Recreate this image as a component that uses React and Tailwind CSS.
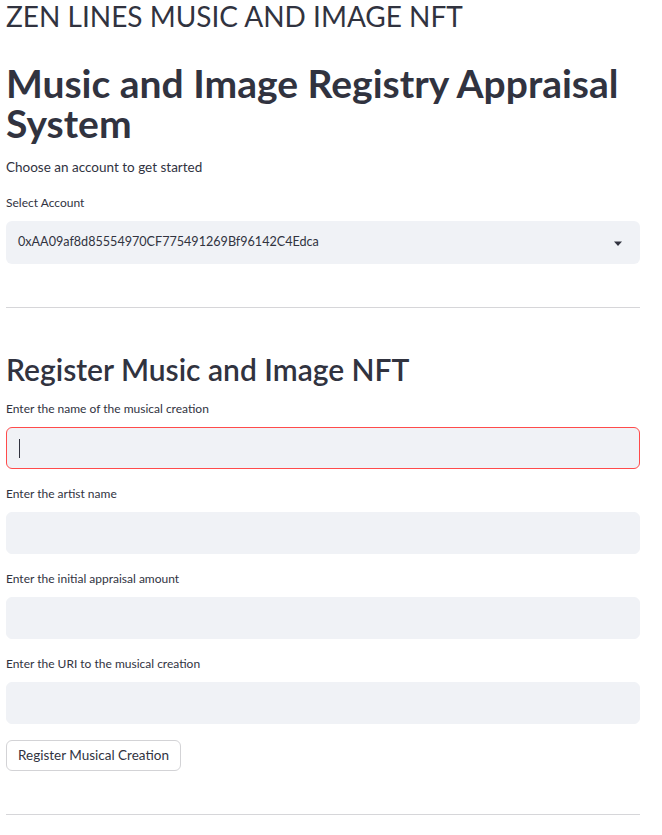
import React from "react";

const FONT = "font-['Lato','Noto_Sans',sans-serif]";

const Label = ({ children }) => (
  <div className="h-[20px] flex items-center text-[12px] text-[#31333f]">
    {children}
  </div>
);

const TextBox = ({ focused }) => (
  <div
    className={`mt-[8px] h-[42px] rounded-[6px] bg-[#f0f2f6] flex items-center px-[12px] border ${
      focused ? "border-[#ff4b4b]" : "border-[#f0f2f6]"
    }`}
  >
    {focused && <span className="block w-[1px] h-[19px] bg-[#31333f]" />}
  </div>
);

const Field = ({ label, focused, className }) => (
  <div className={className}>
    <Label>{label}</Label>
    <TextBox focused={focused} />
  </div>
);

export default function App() {
  return (
    <div className={`${FONT} bg-white text-[#31333f] min-h-[835px] pl-[6px] pr-[22px]`}>
      <div className="h-[32px] text-[28px] leading-[32px] font-normal">
        ZEN LINES MUSIC AND IMAGE NFT
      </div>

      <h1 className="mt-[31px] text-[39px] leading-[40px] font-bold">
        Music and Image Registry Appraisal System
      </h1>

      <p className="mt-[14px] h-[20px] flex items-center text-[13.5px]">
        Choose an account to get started
      </p>

      <div className="mt-[16px]">
        <Label>Select Account</Label>
        <div className="mt-[8px] h-[43px] rounded-[6px] bg-[#f0f2f6] flex items-center justify-between pl-[12px] pr-[12px] text-[12.6px]">
          <span>0xAA09af8d85554970CF775491269Bf96142C4Edca</span>
          <svg width="20" height="20" viewBox="0 0 20 20">
            <path d="M6 8.5h8l-4 4.5z" fill="#31333f" />
          </svg>
        </div>
      </div>

      <hr className="mt-[43px] border-0 border-t border-[#d6d6d9]" />

      <h2 className="mt-[41px] h-[40px] flex items-center text-[30px] font-semibold">
        Register Music and Image NFT
      </h2>

      <Field className="mt-[10px]" label="Enter the name of the musical creation" focused />
      <Field className="mt-[15px]" label="Enter the artist name" />
      <Field className="mt-[15px]" label="Enter the initial appraisal amount" />
      <Field className="mt-[15px]" label="Enter the URI to the musical creation" />

      <button className="mt-[16px] h-[31px] px-[11px] rounded-[6px] border border-[#d3d3d6] bg-white text-[13.5px] text-[#31333f]">
        Register Musical Creation
      </button>

      <hr className="mt-[43px] border-0 border-t border-[#d6d6d9]" />
    </div>
  );
}
